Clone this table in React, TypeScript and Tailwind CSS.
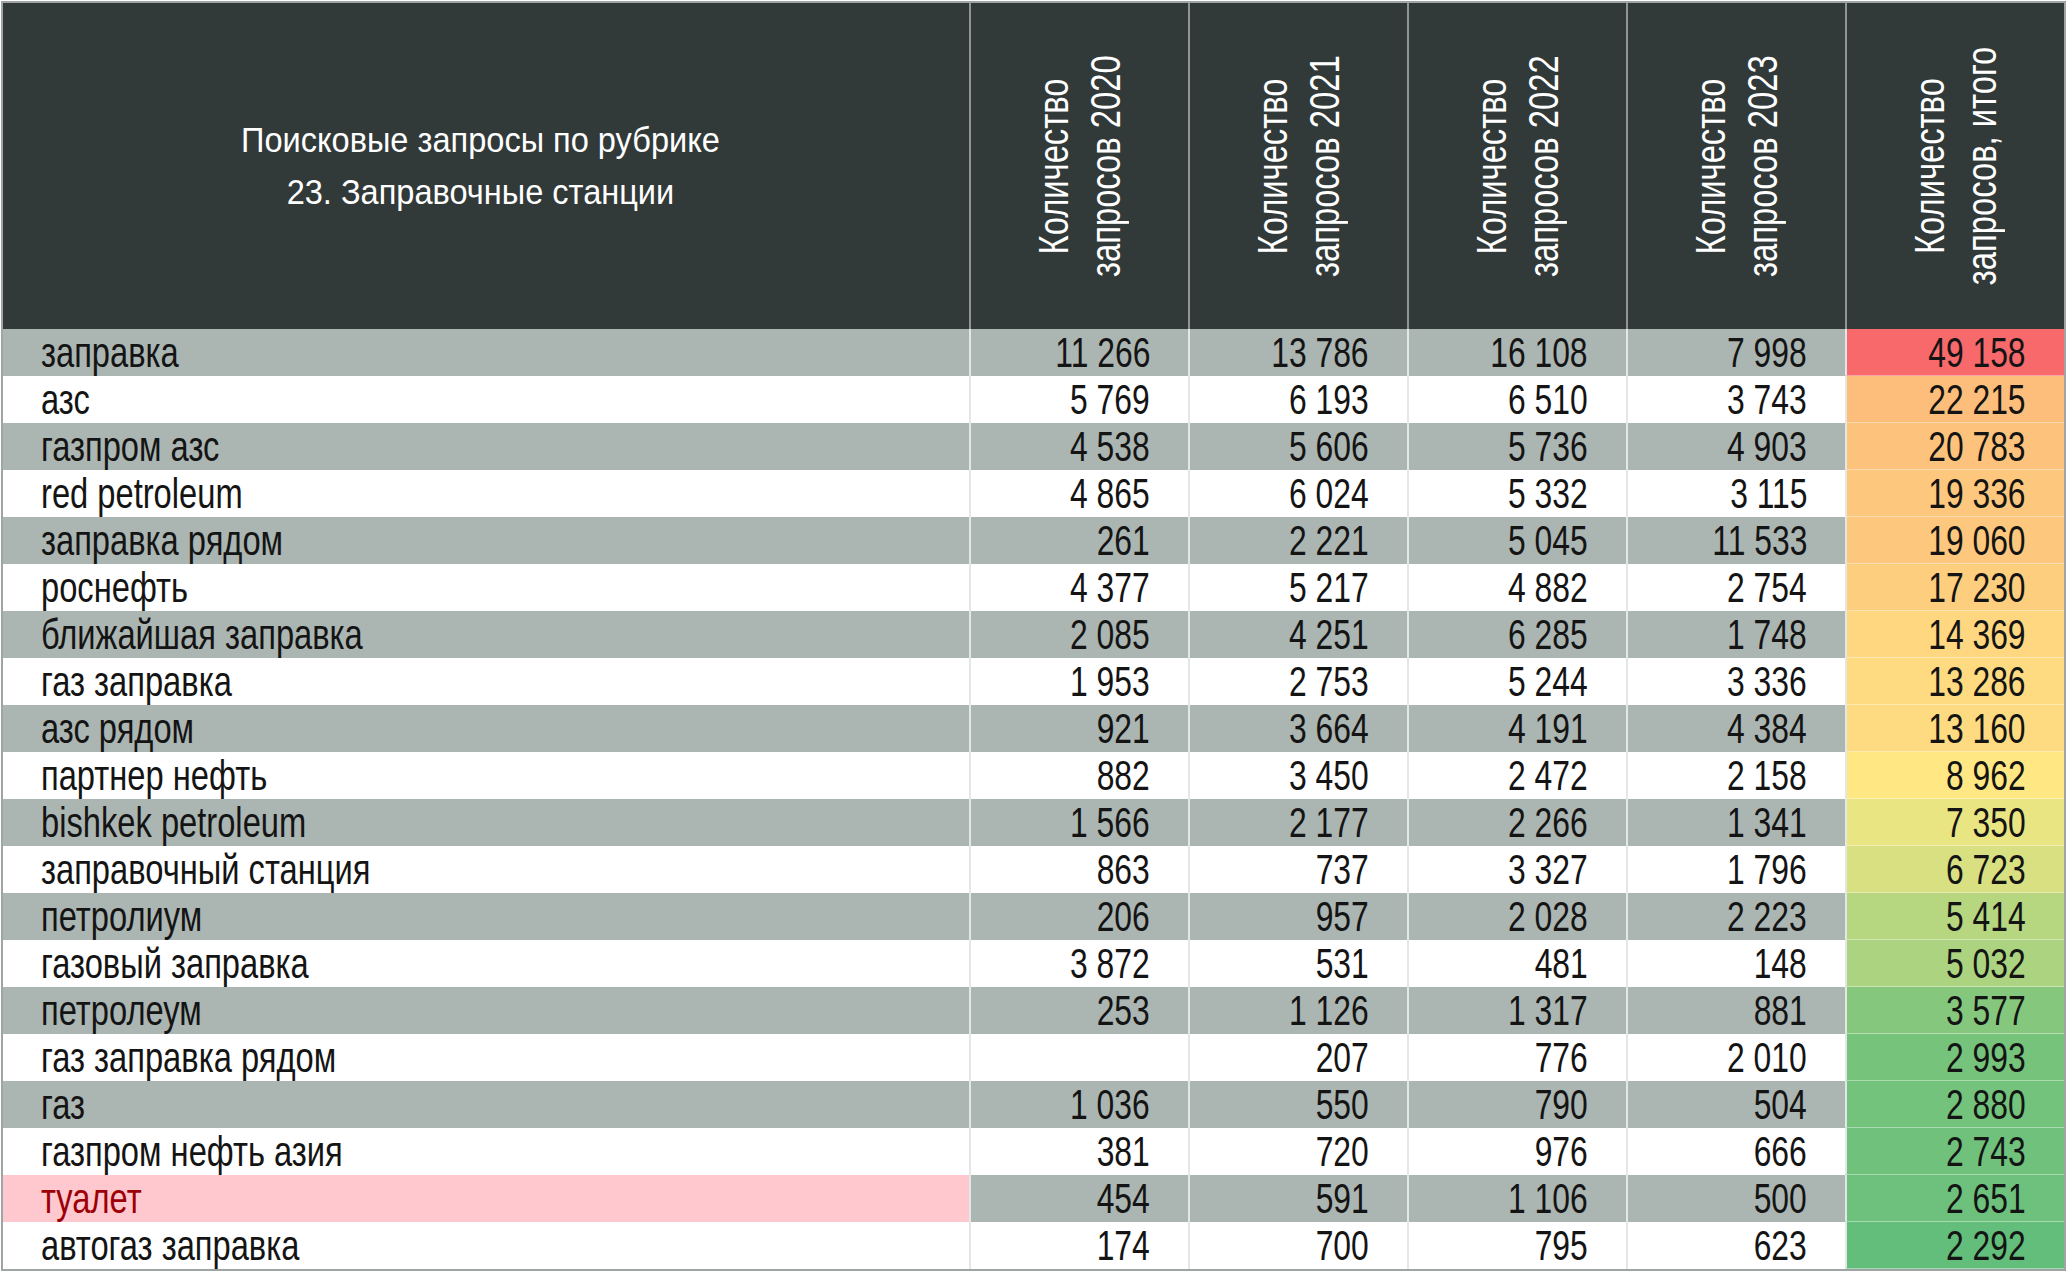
import React from "react";

interface Row {
  query: string;
  years: (number | null)[];
  total: number;
  flagged?: boolean;
}

const rows: Row[] = [
  { query: "заправка", years: [11266, 13786, 16108, 7998], total: 49158 },
  { query: "азс", years: [5769, 6193, 6510, 3743], total: 22215 },
  { query: "газпром азс", years: [4538, 5606, 5736, 4903], total: 20783 },
  { query: "red petroleum", years: [4865, 6024, 5332, 3115], total: 19336 },
  { query: "заправка рядом", years: [261, 2221, 5045, 11533], total: 19060 },
  { query: "роснефть", years: [4377, 5217, 4882, 2754], total: 17230 },
  { query: "ближайшая заправка", years: [2085, 4251, 6285, 1748], total: 14369 },
  { query: "газ заправка", years: [1953, 2753, 5244, 3336], total: 13286 },
  { query: "азс рядом", years: [921, 3664, 4191, 4384], total: 13160 },
  { query: "партнер нефть", years: [882, 3450, 2472, 2158], total: 8962 },
  { query: "bishkek petroleum", years: [1566, 2177, 2266, 1341], total: 7350 },
  { query: "заправочный станция", years: [863, 737, 3327, 1796], total: 6723 },
  { query: "петролиум", years: [206, 957, 2028, 2223], total: 5414 },
  { query: "газовый заправка", years: [3872, 531, 481, 148], total: 5032 },
  { query: "петролеум", years: [253, 1126, 1317, 881], total: 3577 },
  { query: "газ заправка рядом", years: [null, 207, 776, 2010], total: 2993 },
  { query: "газ", years: [1036, 550, 790, 504], total: 2880 },
  { query: "газпром нефть азия", years: [381, 720, 976, 666], total: 2743 },
  { query: "туалет", years: [454, 591, 1106, 500], total: 2651, flagged: true },
  { query: "автогаз заправка", years: [174, 700, 795, 623], total: 2292 },
];

const headers = [
  ["Количество", "запросов 2020"],
  ["Количество", "запросов 2021"],
  ["Количество", "запросов 2022"],
  ["Количество", "запросов 2023"],
  ["Количество", "запросов, итого"],
];

const fmt = (n: number | null) =>
  n === null ? "" : n.toString().replace(/\B(?=(\d{3})+(?!\d))/g, " ");

// Excel-like 3 colour scale: green (min) -> yellow (median) -> red (max)
const RED = [248, 105, 107];
const YELLOW = [255, 235, 132];
const GREEN = [99, 190, 123];

const totals = rows.map((r) => r.total).sort((a, b) => a - b);
const minT = totals[0];
const maxT = totals[totals.length - 1];
const midT = (totals[9] + totals[10]) / 2;

const mix = (a: number[], b: number[], t: number) =>
  `rgb(${a.map((v, i) => Math.round(v + (b[i] - v) * t)).join(",")})`;

const scaleColor = (v: number) =>
  v >= midT
    ? mix(YELLOW, RED, (v - midT) / (maxT - midT))
    : mix(YELLOW, GREEN, (midT - v) / (midT - minT));

const HeaderCell: React.FC<{ lines: string[] }> = ({ lines }) => (
  <div className="flex items-center justify-center border-l-2 border-[#8e9594] bg-[#323a39]">
    <div className="[writing-mode:vertical-rl] rotate-180 scale-y-[0.78] text-center text-[42px] leading-[52px] text-white whitespace-nowrap">
      {lines.map((l) => (
        <div key={l}>{l}</div>
      ))}
    </div>
  </div>
);

const App: React.FC = () => {
  return (
    <div
      className="w-[2067px] h-[1272px] bg-white p-px overflow-hidden"
      style={{ fontFamily: '"Liberation Sans", Arial, sans-serif' }}
    >
      <div className="h-full border-2 border-[#9ea5a4] bg-white">
        <div className="grid grid-cols-[966px_repeat(5,1fr)] h-[326px]">
          <div className="flex items-center justify-center pr-3 bg-[#323a39] text-white text-[35px] leading-[52px] text-center">
            <div className="scale-x-[0.93]">
              <div>Поисковые запросы по рубрике</div>
              <div>23. Заправочные станции</div>
            </div>
          </div>
          {headers.map((h) => (
            <HeaderCell key={h[1]} lines={h} />
          ))}
        </div>

        {rows.map((row, i) => {
          const gray = i % 2 === 0;
          const rowBg = gray ? "bg-[#abb5b2]" : "bg-white";
          return (
            <div
              key={row.query}
              className={`grid grid-cols-[966px_repeat(5,1fr)] h-[47px] text-[43px] leading-none text-[#141414] ${rowBg}`}
            >
              <div
                className={`flex items-center pl-[38px] ${
                  row.flagged ? "bg-[#ffc7ce] text-[#9c0006]" : ""
                }`}
              >
                <span className="inline-block origin-left scale-x-[0.76] whitespace-nowrap">
                  {row.query}
                </span>
              </div>
              {row.years.map((v, j) => (
                <div
                  key={j}
                  className="flex items-center justify-end pr-[38px] border-l-2 border-[#e3e7e6]"
                >
                  <span className="inline-block origin-right scale-x-[0.74] whitespace-nowrap">
                    {fmt(v)}
                  </span>
                </div>
              ))}
              <div
                className="flex items-center justify-end pr-[38px] border-l-2 border-b border-l-[#e3e7e6] border-b-white/40"
                style={{ backgroundColor: scaleColor(row.total) }}
              >
                <span className="inline-block origin-right scale-x-[0.74] whitespace-nowrap">
                  {fmt(row.total)}
                </span>
              </div>
            </div>
          );
        })}
      </div>
    </div>
  );
};

export default App;
